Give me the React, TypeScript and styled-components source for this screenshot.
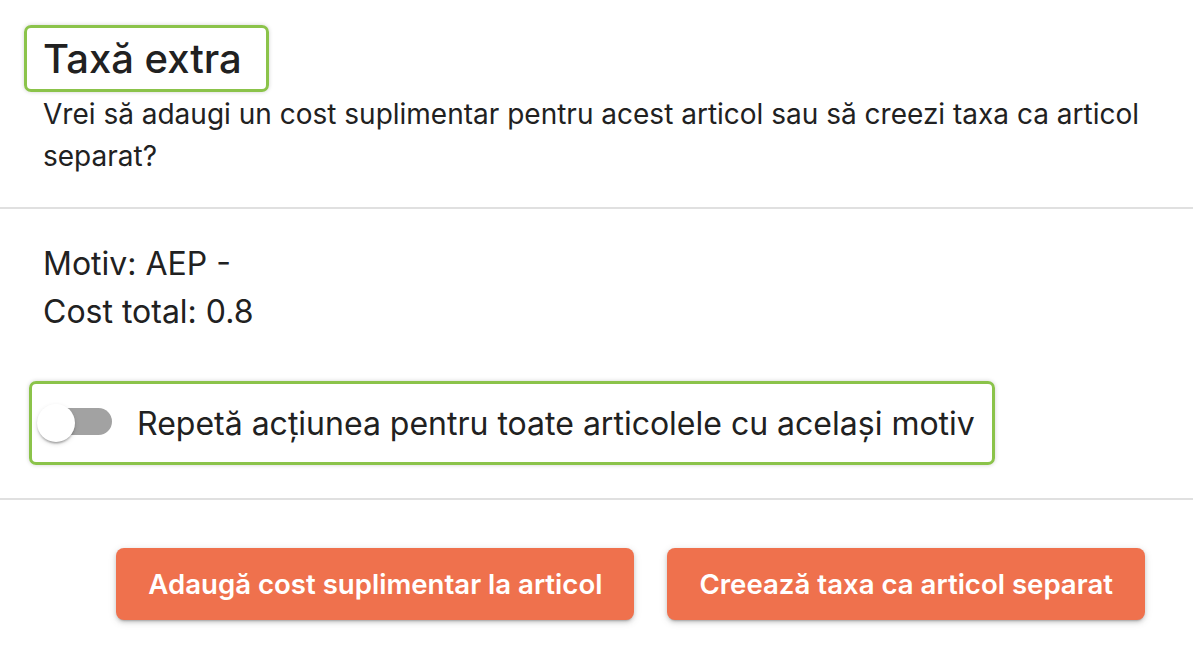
import * as React from "react";
import styled, { createGlobalStyle } from "styled-components";

const GlobalStyle = createGlobalStyle`
    html, body {
        margin: 0;
        padding: 0;
        background: #fff;
    }
    body {
        font-family: Inter, "Noto Sans", "Liberation Sans", sans-serif;
        color: #212121;
    }
`;

const HIGHLIGHT = "#8bc34a";
const ACCENT = "#ef714d";

const Dialog = styled.div`
    width: 1193px;
    display: flex;
    flex-direction: column;
`;

const Header = styled.div`
    padding: 25px 48px 30px 24px;
`;

const TitleBox = styled.h2`
    display: inline-block;
    margin: 0;
    padding: 1px 24px 0 16px;
    height: 60px;
    border: 3px solid ${HIGHLIGHT};
    border-radius: 7px;
    box-shadow: 0 0 4px rgba(0, 0, 0, 0.18);
    font-size: 40px;
    font-weight: 500;
    line-height: 60px;
`;

const Subtitle = styled.p`
    margin: 1px 0 0 19px;
    font-size: 28px;
    line-height: 42px;
`;

const Divider = styled.hr`
    margin: 0;
    border: 0;
    height: 2px;
    background: #e0e0e0;
`;

const Content = styled.div`
    padding: 31px 48px 33px 29px;
    display: flex;
    flex-direction: column;
    align-items: flex-start;
`;

const InfoLine = styled.div`
    margin-left: 14px;
    font-size: 32px;
    line-height: 48px;
`;

const ToggleRow = styled.label`
    margin-top: 45px;
    display: inline-flex;
    align-items: center;
    gap: 24px;
    height: 78px;
    padding: 0 17px 0 5px;
    border: 3px solid ${HIGHLIGHT};
    border-radius: 7px;
    box-shadow: 0 0 4px rgba(0, 0, 0, 0.18);
    font-size: 32px;
    cursor: pointer;
`;

const Switch = styled.span`
    position: relative;
    width: 76px;
    height: 38px;
    flex: 0 0 auto;
`;

const Track = styled.span<{ checked: boolean }>`
    position: absolute;
    left: 18px;
    top: 4px;
    width: 57px;
    height: 27px;
    border-radius: 14px;
    background: ${props => props.checked ? "#f6b8a6" : "#a2a2a2"};
`;

const Thumb = styled.span<{ checked: boolean }>`
    position: absolute;
    top: 0;
    left: ${props => props.checked ? "38px" : "0"};
    width: 38px;
    height: 38px;
    border-radius: 50%;
    background: ${props => props.checked ? ACCENT : "#fff"};
    box-shadow: 0 3px 2px -2px rgba(0, 0, 0, 0.2),
                0 2px 2px 0 rgba(0, 0, 0, 0.14),
                0 2px 5px 0 rgba(0, 0, 0, 0.12);
    transition: left 150ms;
`;

const Actions = styled.div`
    display: flex;
    justify-content: flex-end;
    gap: 33px;
    padding: 48px 48px 40px;
`;

const ActionButton = styled.button`
    height: 72px;
    padding: 0 32px;
    border: 0;
    border-radius: 8px;
    background: ${ACCENT};
    color: #fff;
    font-family: inherit;
    font-size: 27.6px;
    font-weight: 600;
    white-space: nowrap;
    box-shadow: 0 3px 2px -2px rgba(0, 0, 0, 0.2),
                0 2px 4px 0 rgba(0, 0, 0, 0.14),
                0 2px 8px 0 rgba(0, 0, 0, 0.12);
    cursor: pointer;
`;

export default function App(): JSX.Element {
    const [repeat, setRepeat] = React.useState(false);

    return (
        <Dialog>
            <GlobalStyle />
            <Header>
                <TitleBox>Taxă extra</TitleBox>
                <Subtitle>
                    Vrei să adaugi un cost suplimentar pentru acest articol sau să creezi taxa ca articol separat?
                </Subtitle>
            </Header>
            <Divider />
            <Content>
                <InfoLine>Motiv: AEP -</InfoLine>
                <InfoLine>Cost total: 0.8</InfoLine>
                <ToggleRow onClick={() => setRepeat(r => !r)}>
                    <Switch>
                        <Track checked={repeat} />
                        <Thumb checked={repeat} />
                    </Switch>
                    Repetă acțiunea pentru toate articolele cu același motiv
                </ToggleRow>
            </Content>
            <Divider />
            <Actions>
                <ActionButton>Adaugă cost suplimentar la articol</ActionButton>
                <ActionButton>Creează taxa ca articol separat</ActionButton>
            </Actions>
        </Dialog>
    );
}
